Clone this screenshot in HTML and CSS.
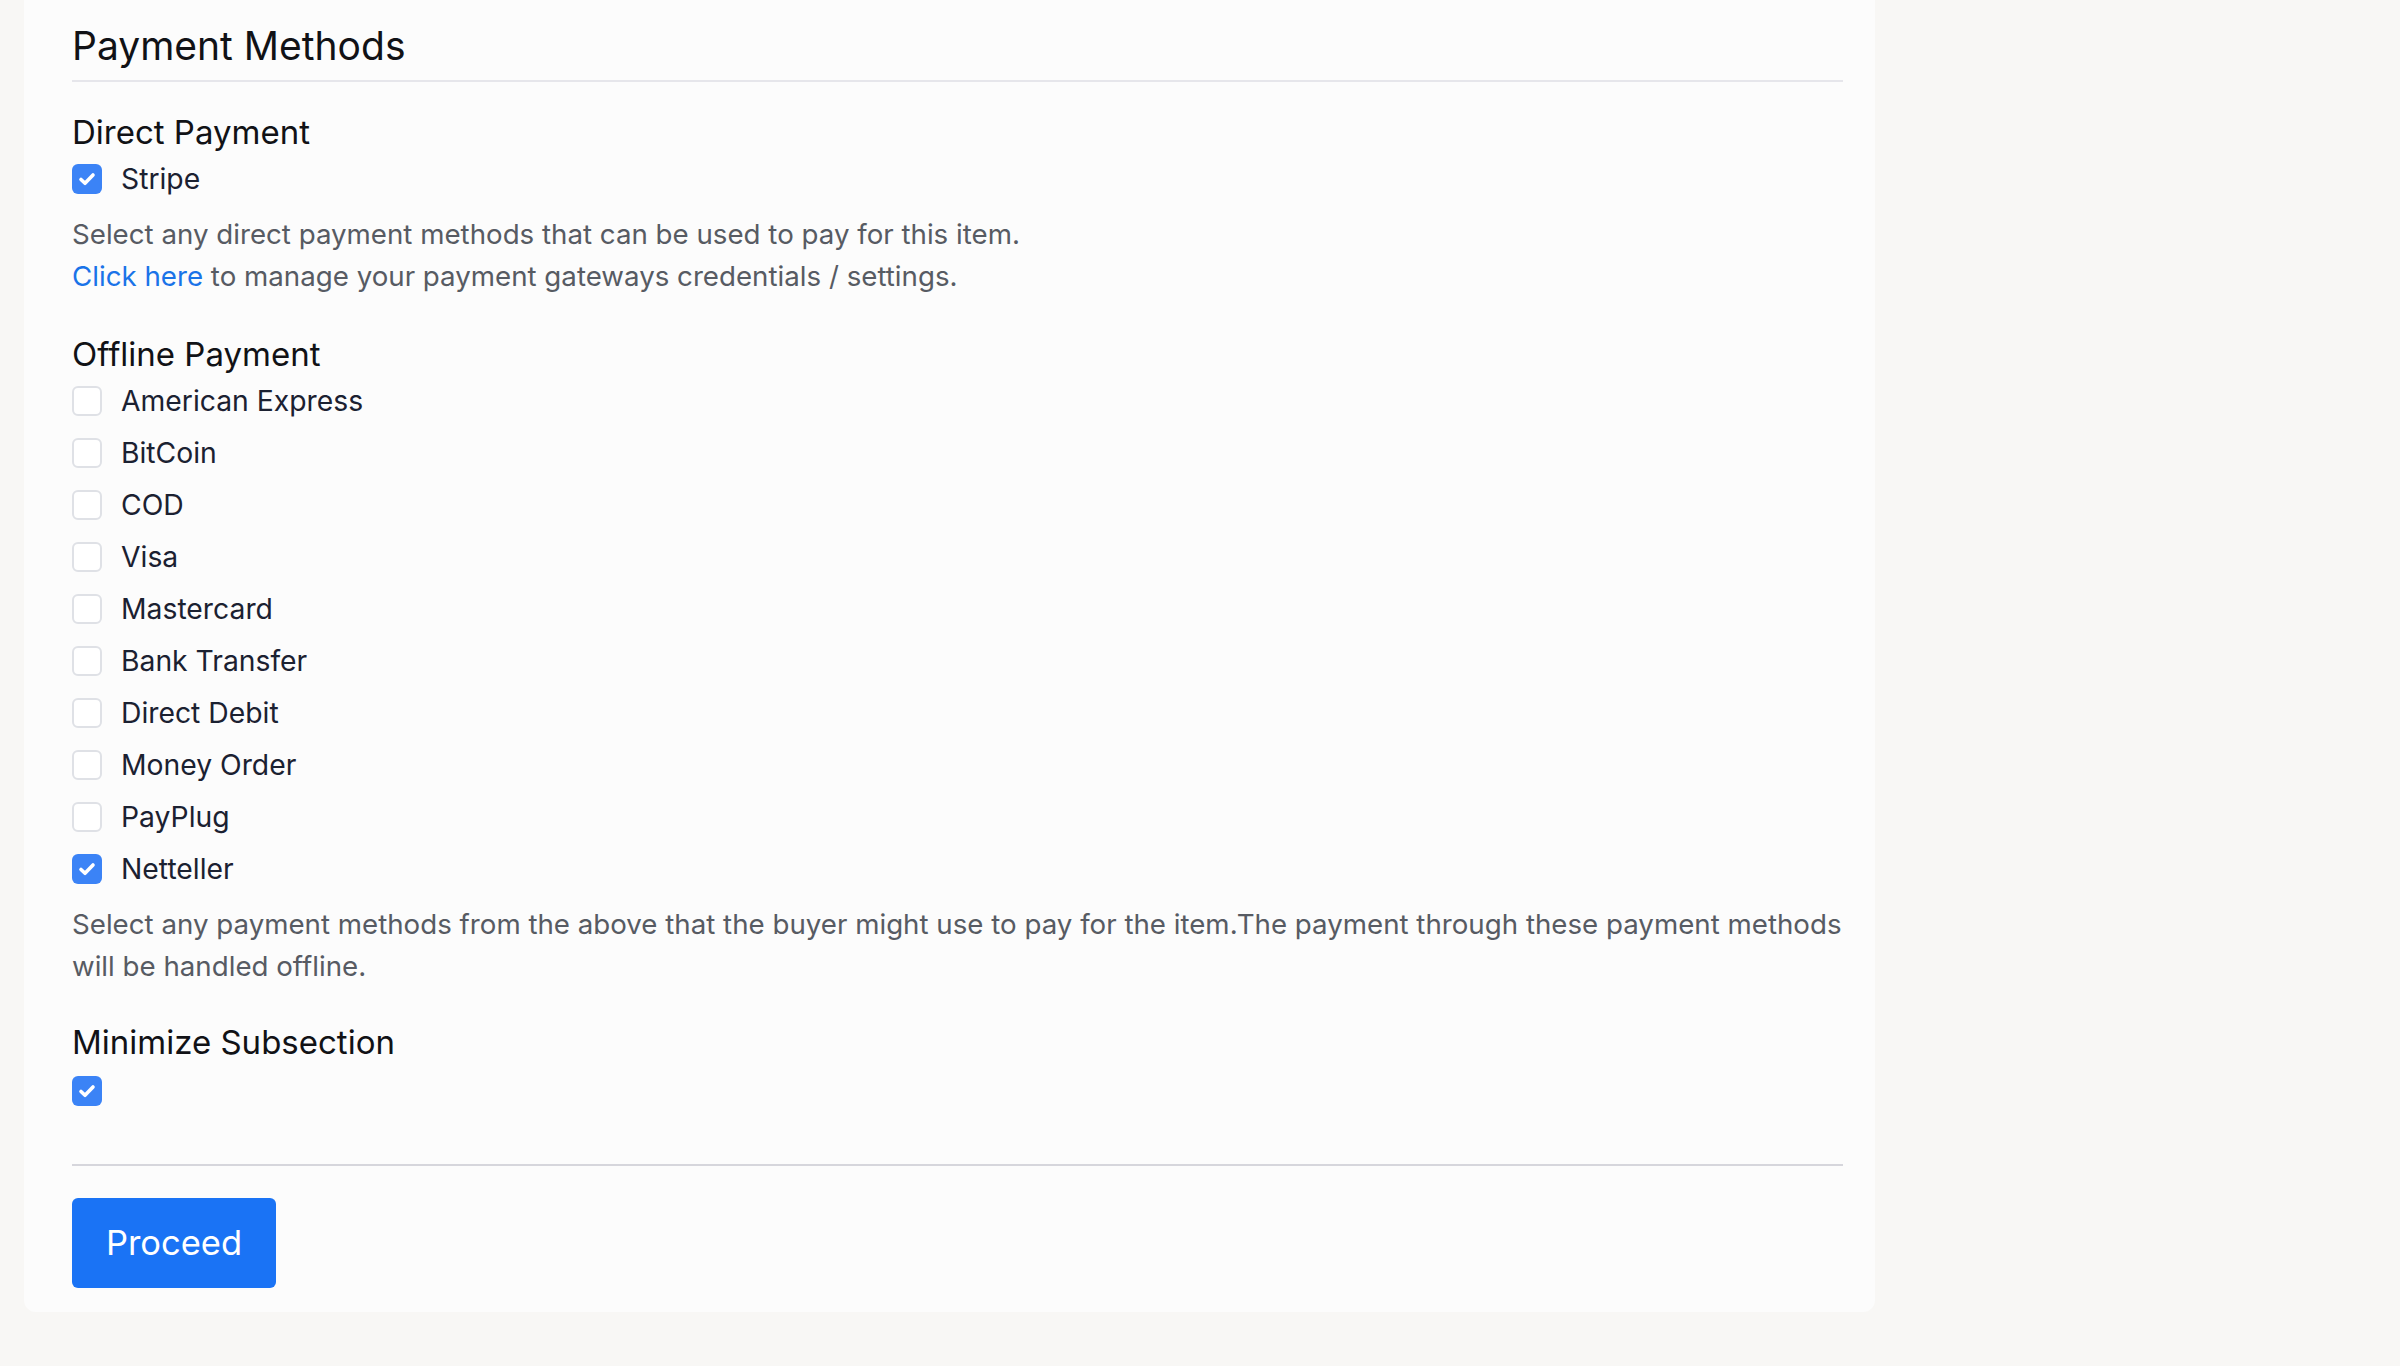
FILE: index.html
```html
<!DOCTYPE html>
<html lang="en">
<head>
<meta charset="utf-8">
<title>Payment Methods</title>
<link rel="stylesheet" href="styles.css">
</head>
<body>
<div class="page">
  <div class="card">
    <h1 class="title">Payment Methods</h1>
    <hr class="sep-top">

    <h2 class="heading h-direct">Direct Payment</h2>
    <div class="options">
      <label class="opt"><span class="box checked"><svg viewBox="0 0 30 30" width="30" height="30"><path d="M9 15.5l4 3.8 8-8.3" fill="none" stroke="#fff" stroke-width="3.6" stroke-linecap="round" stroke-linejoin="round"/></svg></span><span class="lbl">Stripe</span></label>
    </div>
    <p class="desc">Select any direct payment methods that can be used to pay for this item.<br><a class="link" href="#">Click here</a> to manage your payment gateways credentials / settings.</p>

    <h2 class="heading h-offline">Offline Payment</h2>
    <div class="options">
      <label class="opt"><span class="box"></span><span class="lbl">American Express</span></label>
      <label class="opt"><span class="box"></span><span class="lbl">BitCoin</span></label>
      <label class="opt"><span class="box"></span><span class="lbl">COD</span></label>
      <label class="opt"><span class="box"></span><span class="lbl">Visa</span></label>
      <label class="opt"><span class="box"></span><span class="lbl">Mastercard</span></label>
      <label class="opt"><span class="box"></span><span class="lbl">Bank Transfer</span></label>
      <label class="opt"><span class="box"></span><span class="lbl">Direct Debit</span></label>
      <label class="opt"><span class="box"></span><span class="lbl">Money Order</span></label>
      <label class="opt"><span class="box"></span><span class="lbl">PayPlug</span></label>
      <label class="opt"><span class="box checked"><svg viewBox="0 0 30 30" width="30" height="30"><path d="M9 15.5l4 3.8 8-8.3" fill="none" stroke="#fff" stroke-width="3.6" stroke-linecap="round" stroke-linejoin="round"/></svg></span><span class="lbl">Netteller</span></label>
    </div>
    <p class="desc">Select any payment methods from the above that the buyer might use to pay for the item.The payment through these payment methods will be handled offline.</p>

    <h2 class="heading h-min">Minimize Subsection</h2>
    <div class="options single">
      <label class="opt"><span class="box checked"><svg viewBox="0 0 30 30" width="30" height="30"><path d="M9 15.5l4 3.8 8-8.3" fill="none" stroke="#fff" stroke-width="3.6" stroke-linecap="round" stroke-linejoin="round"/></svg></span></label>
    </div>

    <hr class="sep-bottom">
    <button class="btn" type="button">Proceed</button>
  </div>
</div>
</body>
</html>
```

FILE: styles.css
```css
html, body {
  margin: 0;
  padding: 0;
  background: #f8f7f5;
}
body {
  font-family: Inter, "Noto Sans", "Liberation Sans", sans-serif;
  color: #1b2131;
}
.page {
  padding: 0 0 0 24px;
}
.card {
  width: 1851px;
  box-sizing: border-box;
  background: #fcfcfc;
  border-radius: 0 0 12px 12px;
  padding: 23.5px 32px 24.5px 48px;
}
.title {
  margin: 0;
  font-size: 39px;
  line-height: 44px;
  font-weight: 400;
  color: #111216;
}
.sep-top {
  margin: 12.5px 0 0 0;
  border: 0;
  height: 2px;
  background: #e6e6eb;
}
.heading {
  margin: 0;
  font-size: 33px;
  line-height: 40px;
  font-weight: 400;
  color: #111216;
}
.h-direct { margin-top: 30px; }
.h-offline { margin-top: 37px; }
.h-min { margin-top: 35px; }
.options {
  display: flex;
  flex-direction: column;
  gap: 22px;
  margin-top: 12px;
}
.options.single { margin-top: 13.5px; }
.opt {
  display: flex;
  align-items: center;
  gap: 19px;
  height: 30px;
}
.box {
  width: 30px;
  height: 30px;
  box-sizing: border-box;
  border: 2px solid #dfe1e6;
  border-radius: 6px;
  background: #fff;
  flex: none;
  display: flex;
}
.box.checked {
  border: 0;
  background: #3b83f6;
}
.box svg { display: block; }
.lbl {
  font-size: 28.3px;
  line-height: 30px;
  color: #1b2131;
}
.desc {
  margin: 19px 0 0 0;
  font-size: 27.7px;
  line-height: 42px;
  color: #575b63;
}
.link {
  color: #1a73e8;
  text-decoration: none;
}
.sep-bottom {
  margin: 58px 0 0 0;
  border: 0;
  height: 2px;
  background: #d6d6dc;
}
.btn {
  margin-top: 32px;
  display: block;
  width: 204px;
  height: 90px;
  border: 0;
  border-radius: 6px;
  background: #1a73f5;
  color: #fff;
  font-family: Inter, "Noto Sans", "Liberation Sans", sans-serif;
  font-size: 34.5px;
  padding: 0;
  cursor: pointer;
}
```
